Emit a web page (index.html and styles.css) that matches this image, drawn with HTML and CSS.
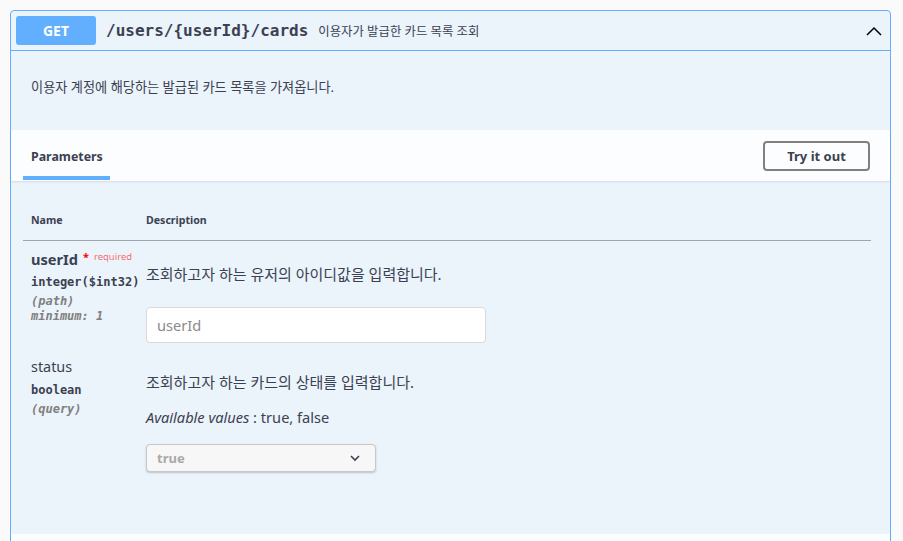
FILE: index.html
```html
<!DOCTYPE html>
<html lang="ko">
<head>
<meta charset="utf-8">
<title>GET /users/{userId}/cards</title>
<link rel="stylesheet" href="styles.css">
</head>
<body>
<div class="opblock">
  <div class="summary">
    <span class="method">GET</span>
    <span class="path">/users/{userId}/cards</span>
    <span class="summary-desc">이용자가 발급한 카드 목록 조회</span>
    <svg class="chevron" width="20" height="20" viewBox="0 0 20 20"><polyline points="3,14 10,7 17,14" fill="none" stroke="#000" stroke-width="1.5"/></svg>
  </div>
  <div class="op-body">
    <div class="op-desc"><p>이용자 계정에 해당하는 발급된 카드 목록을 가져옵니다.</p></div>
    <div class="section-header">
      <div class="tab"><span>Parameters</span></div>
      <button class="try-btn">Try it out</button>
    </div>
    <div class="params">
      <table class="param-table">
        <thead>
          <tr><th class="col-name">Name</th><th>Description</th></tr>
        </thead>
        <tbody>
          <tr>
            <td class="col-name">
              <div class="param-name required">userId<span class="req-star">*</span><span class="req-label">required</span></div>
              <div class="param-type">integer<span class="fmt">($int32)</span></div>
              <div class="param-in">(path)</div>
              <div class="param-ext">minimum: 1</div>
            </td>
            <td class="col-desc">
              <p class="desc-text">조회하고자 하는 유저의 아이디값을 입력합니다.</p>
              <input class="text-input" type="text" placeholder="userId" readonly>
            </td>
          </tr>
          <tr>
            <td class="col-name">
              <div class="param-name">status</div>
              <div class="param-type">boolean</div>
              <div class="param-in">(query)</div>
            </td>
            <td class="col-desc">
              <p class="desc-text desc-second">조회하고자 하는 카드의 상태를 입력합니다.</p>
              <p class="avail"><i>Available values</i> : true, false</p>
              <div class="select">
                <span>true</span>
                <svg width="12" height="8" viewBox="0 0 12 8"><polyline points="2,2 6,6 10,2" fill="none" stroke="#3b4151" stroke-width="1.6"/></svg>
              </div>
            </td>
          </tr>
        </tbody>
      </table>
    </div>
    <div class="section-header next"></div>
  </div>
</div>
</body>
</html>
```
FILE: styles.css
```css
html, body {
  margin: 0;
  padding: 0;
  background: #fafafa;
  height: 541px;
  overflow: hidden;
}
body {
  font-family: "Noto Sans", "Noto Sans CJK KR", sans-serif;
  color: #3b4151;
  padding: 10px 0 0 10px;
  box-sizing: border-box;
}
.opblock {
  width: 881px;
  box-sizing: border-box;
  border: 1px solid #61affe;
  border-radius: 4px 4px 0 0;
  background: #ebf3fb;
}
.summary {
  display: flex;
  align-items: center;
  padding: 5px;
  height: 40px;
  box-sizing: border-box;
  border-bottom: 1px solid #61affe;
}
.method {
  width: 80px;
  height: 29px;
  background: #61affe;
  border-radius: 3px;
  color: #fff;
  font-size: 14px;
  font-weight: 700;
  display: flex;
  align-items: center;
  justify-content: center;
}
.path {
  font-family: "DejaVu Sans Mono", monospace;
  font-weight: 700;
  font-size: 16px;
  margin-left: 10px;
  color: #3b4151;
}
.summary-desc {
  font-size: 12.4px;
  margin-left: 10px;
  color: #3b4151;
}
.chevron {
  margin-left: auto;
  margin-right: 1px;
}
.op-desc {
  padding: 27px 20px 34px;
}
.op-desc p {
  margin: 0;
  font-size: 13.2px;
  line-height: 18px;
}
.section-header {
  display: flex;
  align-items: center;
  justify-content: space-between;
  height: 51px;
  box-sizing: border-box;
  padding: 0 20px 0 12px;
  background: rgba(255, 255, 255, 0.8);
  box-shadow: 0 1px 2px rgba(0, 0, 0, 0.1);
}
.tab {
  align-self: stretch;
  display: flex;
  align-items: center;
  padding: 6px 7px 0 8px;
  margin-bottom: 1px;
  border-bottom: 4px solid #61affe;
  font-size: 12.4px;
  font-weight: 700;
}
.try-btn {
  width: 107px;
  height: 30px;
  border: 2px solid #808080;
  border-radius: 4px;
  background: transparent;
  font-family: "Noto Sans", sans-serif;
  font-size: 13px;
  font-weight: 700;
  color: #3b4151;
  padding: 0;
}
.params {
  padding: 20px 19px 0 12px;
  height: 353px;
  box-sizing: border-box;
}
.param-table {
  width: 100%;
  border-collapse: collapse;
}
.param-table th {
  text-align: left;
  font-size: 10.6px;
  font-weight: 700;
  line-height: 15px;
  padding: 12px 0;
  border-bottom: 1px solid rgba(59, 65, 81, 0.25);
}
.param-table th.col-name,
.param-table td.col-name {
  width: 115px;
  padding-left: 8px;
}
.param-table td {
  vertical-align: top;
  padding: 10px 0 0;
}
.param-name {
  font-size: 14.4px;
  line-height: 18px;
  margin-top: -1px;
}
.param-name.required {
  font-size: 14.6px;
  font-weight: 700;
}
.req-star {
  color: #f00;
  font-size: 11px;
  position: relative;
  top: -4px;
  margin-left: 5px;
}
.req-label {
  color: rgba(255, 0, 0, 0.6);
  font-size: 9.5px;
  font-weight: 400;
  position: relative;
  top: -5px;
  margin-left: 5px;
}
.param-type {
  font-family: "DejaVu Sans Mono", monospace;
  font-size: 12px;
  font-weight: 700;
  line-height: 14px;
  padding-top: 7px;
}
.required + .param-type {
  padding-top: 4px;
}
.param-in,
.param-ext {
  font-family: "DejaVu Sans Mono", monospace;
  font-size: 12px;
  font-style: italic;
  font-weight: 700;
  color: #808080;
  line-height: 14px;
}
.param-in {
  padding-top: 5px;
}
.param-ext {
  padding-top: 1px;
}
.desc-text {
  margin: 14px 0 0;
  font-size: 15px;
  line-height: 18px;
}
.desc-second {
  margin-top: 14px;
}
.text-input {
  display: block;
  margin: 24px 0 6px;
  width: 340px;
  height: 36px;
  box-sizing: border-box;
  border: 1px solid #d9d9d9;
  border-radius: 4px;
  background: #fff;
  padding: 0 10px;
  font-family: "Noto Sans", sans-serif;
  font-size: 14.6px;
  outline: none;
}
.text-input::placeholder {
  color: #8a8a8a;
}
.avail {
  margin: 17px 0 0;
  font-size: 14.6px;
  line-height: 18px;
}
.select {
  display: flex;
  align-items: center;
  justify-content: space-between;
  margin-top: 18px;
  width: 230px;
  height: 28px;
  box-sizing: border-box;
  border: 1px solid #c8c8c8;
  border-radius: 4px;
  background: #f7f7f7;
  box-shadow: 0 1px 2px rgba(0, 0, 0, 0.2);
  padding: 0 14px 0 10px;
  font-size: 13px;
  font-weight: 700;
  color: #a9a9a9;
}
.section-header.next {
  height: 20px;
}
```
